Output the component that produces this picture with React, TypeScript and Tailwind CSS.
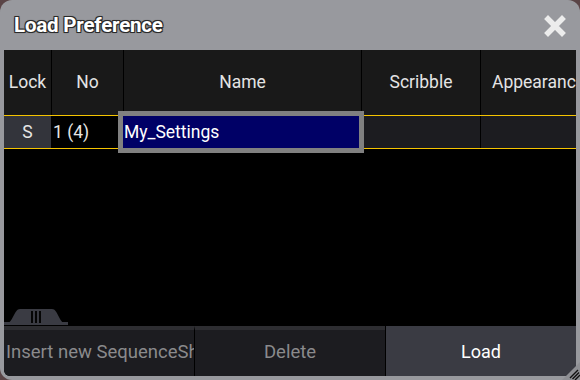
import React from 'react';

const font = "font-['Roboto','Liberation_Sans',sans-serif]";

const columns = [
  { label: 'Lock', width: 'w-[47px]' },
  { label: 'No', width: 'w-[72px]' },
  { label: 'Name', width: 'w-[238px]' },
  { label: 'Scribble', width: 'w-[119px]' },
  { label: 'Appearance', width: 'w-[120px]' },
];

const App: React.FC = () => {
  return (
    <div className={`w-[580px] h-[380px] bg-[#5a4446] overflow-hidden ${font}`}>
      <div className="relative w-full h-full bg-[#98999e] rounded-[12px] flex flex-col">
        {/* Title bar */}
        <div className="h-[50px] flex items-center justify-between pl-[14px] pr-[14px] shrink-0">
          <span className="text-[20.5px] font-bold text-white tracking-[-0.2px] [text-shadow:1px_1px_0_#2a2a2a,-1px_-1px_0_#2a2a2a,1px_-1px_0_#2a2a2a,-1px_1px_0_#2a2a2a,0_0_2px_#000]">
            Load Preference
          </span>
          <svg width="22" height="22" viewBox="0 0 22 22" className="mt-[1px]">
            <path d="M4 4 L18 18 M18 4 L4 18" stroke="#ececec" strokeWidth="5.5" strokeLinecap="square" />
          </svg>
        </div>

        {/* Content */}
        <div className="mx-[4px] mb-[4px] flex-1 flex flex-col bg-black rounded-bl-[6px] overflow-hidden">
          {/* Header */}
          <div className="h-[65px] flex bg-[#191919] shrink-0 overflow-hidden">
            {columns.map((c, i) => (
              <div
                key={c.label}
                className={`${c.width} shrink-0 flex items-center justify-center text-[17.5px] text-[#e4e4e4] whitespace-nowrap ${i > 0 ? 'border-l border-black' : ''} ${i === 4 ? 'justify-start pl-[11px]' : ''}`}
              >
                {c.label}
              </div>
            ))}
          </div>

          {/* Row */}
          <div className="h-[34px] flex border-y border-[#f5c400] shrink-0">
            <div className="w-[47px] shrink-0 bg-[#33343b] flex items-center justify-center text-[17.5px] text-[#e6e6e6]">S</div>
            <div className="w-[72px] shrink-0 bg-black flex items-center pl-[2px] text-[17.5px] text-[#e6e6e6]">1 (4)</div>
            <div className="relative w-[238px] shrink-0">
              <div className="absolute -left-[5px] -right-[3px] -top-[5px] -bottom-[5px] border-[5px] border-[#808080] bg-[#000066] flex items-center pl-[1px] text-[17.5px] text-white">
                My_Settings
              </div>
            </div>
            <div className="w-[119px] shrink-0 bg-[#1c1c20] border-l border-black" />
            <div className="flex-1 bg-[#1c1c20] border-l border-black" />
          </div>

          {/* Empty list with scroll tab */}
          <div className="flex-1 flex flex-col justify-end">
            <svg width="64" height="20" viewBox="0 0 64 20">
              <path d="M3 17 C9 17 10 3 16 3 L48 3 C54 3 55 17 61 17 Z" fill="#3a3b43" />
              <rect x="0" y="16" width="64" height="3" fill="#3a3b43" />
              <rect x="27" y="5" width="2" height="12" fill="#050505" />
              <rect x="31" y="5" width="2" height="12" fill="#050505" />
              <rect x="35" y="5" width="2" height="12" fill="#050505" />
            </svg>
          </div>

          {/* Buttons */}
          <div className="h-[50px] flex shrink-0">
            <div className="w-[190px] shrink-0 bg-[#1c1c20] border-t-[4px] border-[#2d2d31] flex items-center pl-[2px] text-[18.5px] text-[#8a8a8c] whitespace-nowrap overflow-hidden">
              Insert new SequenceSheet
            </div>
            <div className="w-[191px] shrink-0 bg-[#1c1c20] border-t-[4px] border-[#2d2d31] border-l border-l-black flex items-center justify-center text-[18.5px] text-[#8a8a8c]">
              Delete
            </div>
            <div className="flex-1 bg-[#3a3b43] border-l border-l-black flex items-center justify-center text-[18px] text-white">
              Load
            </div>
          </div>
        </div>

        {/* Resize grip */}
        <svg width="18" height="18" viewBox="0 0 18 18" className="absolute right-0 bottom-0">
          <path d="M18 0 L18 18 L0 18 Z" fill="#8e8f94" />
          <path d="M8 16 L16 8 M10.5 17 L17 10.5 M13 18 L18 13" stroke="#111" strokeWidth="1.4" />
        </svg>
      </div>
    </div>
  );
};

export default App;
